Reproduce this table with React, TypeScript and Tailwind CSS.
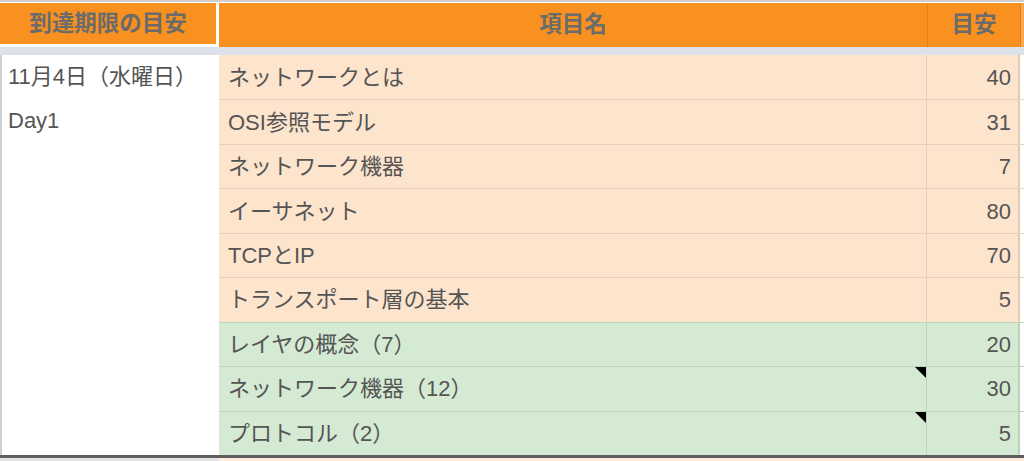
import React from 'react'

type Row = { name: string; value: number; tone: 'peach' | 'green'; note?: boolean }

const rows: Row[] = [
  { name: 'ネットワークとは', value: 40, tone: 'peach' },
  { name: 'OSI参照モデル', value: 31, tone: 'peach' },
  { name: 'ネットワーク機器', value: 7, tone: 'peach' },
  { name: 'イーサネット', value: 80, tone: 'peach' },
  { name: 'TCPとIP', value: 70, tone: 'peach' },
  { name: 'トランスポート層の基本', value: 5, tone: 'peach' },
  { name: 'レイヤの概念（7）', value: 20, tone: 'green' },
  { name: 'ネットワーク機器（12）', value: 30, tone: 'green', note: true },
  { name: 'プロトコル（2）', value: 5, tone: 'green', note: true },
]

const font = { fontFamily: '"Liberation Sans", "Noto Sans CJK JP", sans-serif' }

export default function App() {
  return (
    <div
      className="w-[1024px] h-[461px] overflow-hidden bg-white text-[#555] text-[22px]"
      style={font}
    >
      {/* Top edge */}
      <div className="h-[3px] bg-white border-t-2 border-[#cfcfcf]" />

      {/* Header */}
      <div className="flex h-[44px] font-bold text-[#6b6b6b] text-[22.5px]">
        <div className="w-[216px] h-[41px] bg-[#f8911f] flex items-center justify-center">
          到達期限の目安
        </div>
        <div className="w-[3px]" />
        <div className="flex-1 bg-[#f8911f] flex items-center justify-center">項目名</div>
        <div className="w-[93px] bg-[#f8911f] border-l border-[#e3801a] flex items-center justify-center">
          目安
        </div>
        <div className="w-[4px] bg-[#fba653] border-l border-[#e3801a]" />
      </div>

      {/* Frozen divider */}
      <div className="h-[8px] bg-[#dde1ea]" />

      {/* Body */}
      <div className="flex h-[400px]">
        {/* Merged date cell */}
        <div className="w-[219px] border-l-2 border-[#d0d0d0] bg-white pl-[6px] leading-[44.4px]">
          <div>11月4日（水曜日）</div>
          <div>Day1</div>
        </div>

        {/* Items */}
        <div className="flex-1 grid grid-rows-9">
          {rows.map((r, i) => {
            const bg = r.tone === 'peach' ? 'bg-[#fde4cd]' : 'bg-[#d4ead3]'
            const line = r.tone === 'peach' ? 'border-[#e8cfba]' : 'border-[#bed6bd]'
            return (
              <div key={i} className={`flex ${bg} ${i > 0 ? 'border-t ' + line : ''}`}>
                <div className={`relative w-[708px] flex items-center pl-[9px] border-r ${line}`}>
                  {r.name}
                  {r.note && (
                    <svg className="absolute top-0 right-0" width="11" height="11" viewBox="0 0 11 11">
                      <polygon points="0,0 11,0 11,11" fill="#000" />
                    </svg>
                  )}
                </div>
                <div className={`w-[93px] flex items-center justify-end pr-[7px] border-r-2 ${r.tone === 'peach' ? 'border-[#e2c9b4]' : 'border-[#bbd3ba]'}`}>
                  {r.value}
                </div>
                <div className="flex-1 bg-white" />
              </div>
            )
          })}
        </div>
      </div>

      {/* Bottom rule */}
      <div className="h-[3px] bg-[#5e5e5e]" />
      <div className="flex h-[3px]">
        <div className="w-[219px] bg-[#e2e2e2]" />
        <div className="flex-1 bg-[#fdebdc]" />
      </div>
    </div>
  )
}
